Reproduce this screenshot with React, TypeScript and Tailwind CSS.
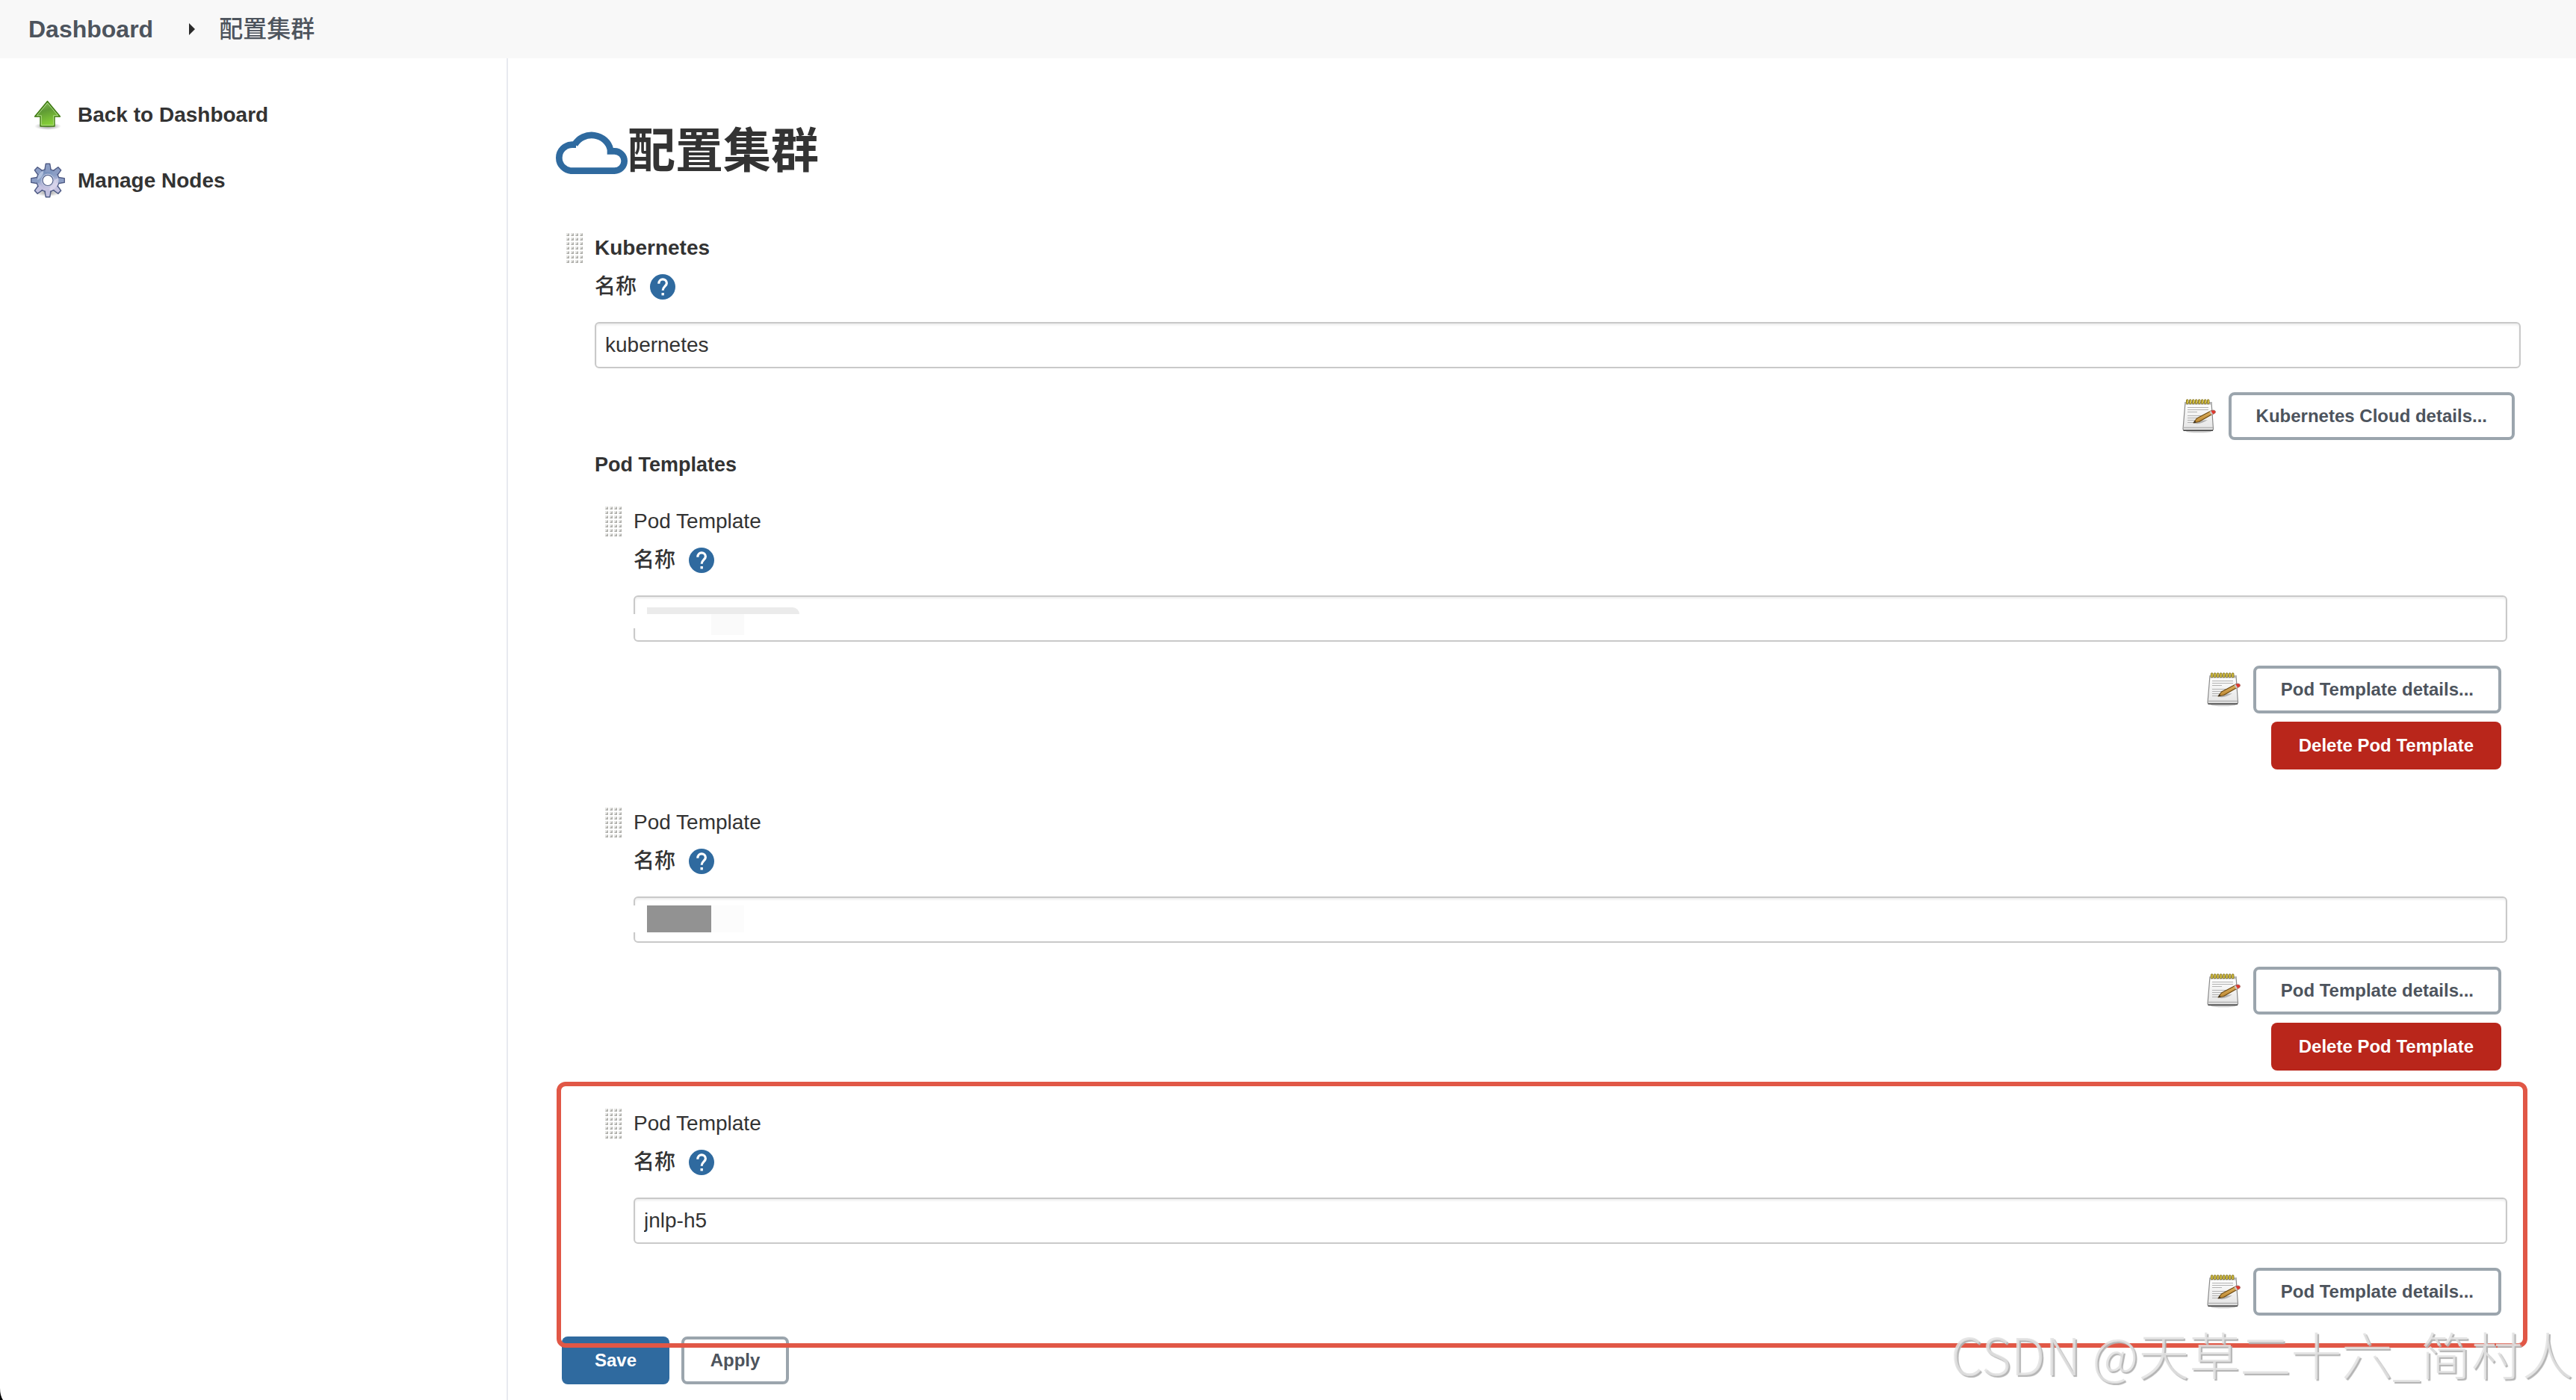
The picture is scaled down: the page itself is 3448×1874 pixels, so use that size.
import React from "react";

const FONT = "font-['Liberation_Sans','Noto_Sans_CJK_SC',sans-serif]";

function UpArrowIcon() {
  return (
    <svg className="h-12 w-12 shrink-0" viewBox="0 0 48 48" aria-hidden="true">
      <defs>
        <linearGradient id="arrowFill" x1="0" y1="0" x2="0.3" y2="1">
          <stop offset="0" stopColor="#8fc463" />
          <stop offset="0.45" stopColor="#5f9a34" />
          <stop offset="1" stopColor="#86cf38" />
        </linearGradient>
        <radialGradient id="arrowShadow">
          <stop offset="0" stopColor="#000" stopOpacity="0.45" />
          <stop offset="1" stopColor="#000" stopOpacity="0" />
        </radialGradient>
      </defs>
      <ellipse cx="24" cy="39" rx="18" ry="5" fill="url(#arrowShadow)" />
      <path d="M23.500 5.500 L40.500 26 H33 V39 H14 V26 H6.500 Z" fill="url(#arrowFill)" stroke="#3f7a12" strokeWidth="1.400" strokeLinejoin="round" />
      <path d="M23.500 8 L37.600 24.700 H31.700 V37.700 H15.300 V24.700 H9.400 Z" fill="none" stroke="#c5e8a4" strokeOpacity="0.75" strokeWidth="1" />
    </svg>
  );
}

function GearIcon() {
  const teeth = [0, 45, 90, 135, 180, 225, 270, 315];
  return (
    <svg className="h-12 w-12 shrink-0" viewBox="0 0 48 48" aria-hidden="true">
      <defs>
        <linearGradient id="gearFill" x1="0.3" y1="0" x2="0.6" y2="1">
          <stop offset="0" stopColor="#6f88b4" />
          <stop offset="0.4" stopColor="#8ea3c9" />
          <stop offset="0.6" stopColor="#b3b6d8" />
          <stop offset="1" stopColor="#d3cbe6" />
        </linearGradient>
        <radialGradient id="gearShadow">
          <stop offset="0" stopColor="#000" stopOpacity="0.4" />
          <stop offset="1" stopColor="#000" stopOpacity="0" />
        </radialGradient>
      </defs>
      <ellipse cx="24" cy="40" rx="17" ry="5" fill="url(#gearShadow)" />
      <g fill="#9fabd0" stroke="#4f5b85" strokeWidth="1.500" strokeLinejoin="round">
        {teeth.map((a) => (
          <path key={a} d="M19.500 12 L21.300 1.300 H26.700 L28.500 12 Z" transform={`rotate(${a} 24 23.500)`} />
        ))}
        <circle cx="24" cy="23.500" r="15" />
      </g>
      <circle cx="24" cy="23.500" r="14.300" fill="url(#gearFill)" />
      <g>
        {teeth.map((a) => (
          <path key={a} d="M20.500 12 L22 2.300 H26 L27.500 12 Z" transform={`rotate(${a} 24 23.500)`} fill={a > 90 && a < 270 ? "#c3c1df" : "#8b9dc4"} />
        ))}
      </g>
      <path d="M38 20 A14.300 14.300 0 0 1 26 37.600 C27 30 31 23 38 20Z" fill="#dfdcf0" opacity="0.7" />
      <path d="M10 23 A14.300 14.300 0 0 1 18 10.500 C19 15 15 21 10 23Z" fill="#c3d0e8" opacity="0.7" />
      <circle cx="24" cy="23.500" r="7" fill="#fff" stroke="#4f5b85" strokeWidth="1.200" />
      <circle cx="24" cy="23.500" r="8.300" fill="none" stroke="#c9d0e6" strokeWidth="1" />
    </svg>
  );
}

function CloudIcon() {
  return (
    <svg className="h-[61px] w-24 shrink-0" viewBox="72 102 288 183" aria-hidden="true">
      <path
        d="M153 167 H137.500 A52.500 52.500 0 0 0 137.500 272 H307.500 A39.500 39.500 0 0 0 307.500 193 H291 V187 A77 73 0 0 0 148 167"
        fill="none"
        stroke="#2f6a9f"
        strokeWidth="26"
      />
    </svg>
  );
}

function NotepadIcon() {
  return (
    <svg className="h-12 w-12 shrink-0" viewBox="0 0 48 48" aria-hidden="true">
      <defs>
        <linearGradient id="paper" x1="0" y1="0" x2="0" y2="1">
          <stop offset="0" stopColor="#ffffff" />
          <stop offset="1" stopColor="#e4e4e4" />
        </linearGradient>
        <linearGradient id="pencil" x1="0" y1="0" x2="0.4" y2="1">
          <stop offset="0" stopColor="#f2cf82" />
          <stop offset="1" stopColor="#b67d25" />
        </linearGradient>
      </defs>
      <ellipse cx="24" cy="44.500" rx="17" ry="1.800" fill="#000" opacity="0.2" />
      <path d="M6 5.500 H41 L43.500 41 Q43.500 43 41.500 43 H4.500 Q3 43 3 41 Z" fill="url(#paper)" stroke="#8a8a8a" strokeWidth="1.200" />
      <path d="M6 5 H41 L41.500 8.500 H5.700 Z" fill="#b5b5b5" />
      <path d="M3.500 39.500 H43" stroke="#b4b4b4" strokeWidth="1.600" />
      <path d="M3.500 43.200 H43" stroke="#444" strokeWidth="1.400" />
      {[0, 1, 2, 3, 4, 5, 6, 7].map((i) => (
        <rect key={i} x={7.5 + i * 4} y="1.800" width="2.400" height="6" rx="1.200" fill="#f5de4e" stroke="#75640f" strokeWidth="1" />
      ))}
      <g stroke="#b2b2b2" strokeWidth="1.200">
        <path d="M9 12.500 H37 M9 15.500 H37 M9 18.500 H22 M9 23.500 H33 M9 26.500 H28 M9 29.500 H20 M9 32.500 H18" />
      </g>
      <path d="M17 33.500 Q26 36 36 29 L28 30 Z" fill="#000" opacity="0.25" />
      <path d="M17 33 L21.500 27 L40.500 17 L42.800 21 L24.500 31.500 Z" fill="url(#pencil)" stroke="#6d4a12" strokeWidth="1.200" strokeLinejoin="round" />
      <path d="M17 33 L18.800 30.300 L20.500 32.200 Z" fill="#2a2a2a" />
      <path d="M39.500 17.500 L43 16 Q46 16 46.500 18 Q46.500 20 45 20.500 L42 22 Z" fill="#e2362d" stroke="#99635c" strokeWidth="0.800" />
      <path d="M38.500 18 L40.500 17 L43 21.300 L41 22.400 Z" fill="#c9c9c9" />
    </svg>
  );
}

function DragHandle({ id }: { id: string }) {
  return (
    <svg className="h-[42px] w-[23px] shrink-0" viewBox="0 0 23 42" aria-hidden="true">
      <defs>
        <pattern id={id} width="6" height="6" patternUnits="userSpaceOnUse">
          <rect x="1" y="1" width="4" height="4" fill="#e6e6e4" />
          <path d="M5 1 V5 H1 Z" fill="#b0b0ac" />
        </pattern>
      </defs>
      <rect width="23" height="42" fill={`url(#${id})`} />
    </svg>
  );
}

function HelpButton() {
  return (
    <button type="button" aria-label="Help" className="h-[34px] w-[34px] shrink-0 rounded-full">
      <svg viewBox="0 0 34 34" className="h-full w-full" aria-hidden="true">
        <circle cx="17" cy="17" r="17" fill="#2f6a9f" />
        <path d="M11.800 12.800 C11.800 4.800 22.400 5.200 22.400 12 C22.400 16 17.200 16.600 17.200 21.800" fill="none" stroke="#fff" strokeWidth="3.200" />
        <rect x="15.500" y="25" width="3.400" height="3.400" fill="#fff" />
      </svg>
    </button>
  );
}

function NameField({ id, value, children }: { id: string; value: string; children?: React.ReactNode }) {
  return (
    <>
      <div className="flex h-14 items-center gap-[18px]">
        <label htmlFor={id} className="text-[28px] font-medium leading-8">名称</label>
        <HelpButton />
      </div>
      <div className="relative mt-[19px]">
        <input
          id={id}
          type="text"
          defaultValue={value}
          className="block h-[62px] w-full rounded-md border-2 border-[#c9c9c9] bg-white px-3 text-[28px] shadow-[inset_0_2px_3px_rgba(0,0,0,0.08)]"
        />
        {children}
      </div>
    </>
  );
}

const OUTLINE =
  "h-16 rounded-lg border-4 border-[#9ba5ad] bg-white text-[24px] font-bold text-[#4d545d]";

function DetailsRow({ label }: { label: string }) {
  return (
    <div className="mt-8 flex items-center justify-end gap-4 pr-2">
      <NotepadIcon />
      <button type="button" className={`${OUTLINE} px-[33px]`}>{label}</button>
    </div>
  );
}

type PodProps = {
  id: string;
  value: string;
  mask?: React.ReactNode;
  deletable?: boolean;
  highlighted?: boolean;
};

function PodTemplate({ id, value, mask, deletable, highlighted }: PodProps) {
  return (
    <section className="relative flex gap-4 pl-[13px]">
      <div className="flex h-12 items-center">
        <DragHandle id={`grip-${id}`} />
      </div>
      <div className="min-w-0 flex-1">
        <h3 className="flex h-12 items-center text-[28px]">Pod Template</h3>
        <NameField id={id} value={value}>{mask}</NameField>
        <DetailsRow label="Pod Template details..." />
        {deletable && (
          <div className="mt-[11px] flex justify-end pr-2">
            <button type="button" className="h-16 rounded-lg bg-[#b9261b] px-[37px] text-[24px] font-bold text-white">
              Delete Pod Template
            </button>
          </div>
        )}
      </div>
      {highlighted && (
        <div className="pointer-events-none absolute -top-8 -right-[27px] -bottom-[43px] -left-[51px] z-10 rounded-xl border-[6px] border-[#e15746]" />
      )}
    </section>
  );
}

function FirstMask() {
  return (
    <div className="pointer-events-none absolute top-4 left-0">
      <div className="ml-[18px] h-[9px] w-[204px] rounded-tr-[16px] bg-[#ebebeb]" />
      <div className="flex h-[19px] w-[104px] bg-white" />
      <div className="absolute top-[9px] left-[104px] h-7 w-11 bg-[#fafafa]" />
    </div>
  );
}

function SecondMask() {
  return (
    <div className="pointer-events-none absolute top-3 left-0 flex h-9">
      <div className="w-[18px] bg-white" />
      <div className="w-[86px] bg-[#929292]" />
      <div className="w-11 bg-[#fcfcfc]" />
    </div>
  );
}

export default function App() {
  return (
    <div className={`${FONT} relative flex min-h-screen flex-col overflow-hidden bg-white text-[#333333]`}>
      <nav className="flex h-[78px] items-center bg-[#f8f8f8] px-[38px] text-[32px] font-bold text-[#4d545d]">
        <a href="#dashboard">Dashboard</a>
        <svg className="mr-8 ml-12 h-4 w-2" viewBox="0 0 8 16" aria-hidden="true">
          <path d="M0 0 L8 8 L0 16 Z" fill="#2b2b2b" />
        </svg>
        <a href="#clouds" className="font-medium">配置集群</a>
      </nav>

      <div className="flex flex-1">
        <aside className="w-[680px] shrink-0 border-r-2 border-[#e8eaf0] pt-8 pl-10">
          <a href="#back" className="flex h-[88px] items-center gap-4 text-[28px] font-bold">
            <UpArrowIcon />
            Back to Dashboard
          </a>
          <a href="#nodes" className="flex h-[88px] items-center gap-4 text-[28px] font-bold">
            <GearIcon />
            Manage Nodes
          </a>
        </aside>

        <main className="min-w-0 flex-1 pt-[76px] pr-[74px] pl-16">
          <h1 className="flex h-24 items-center text-[64px] leading-[96px] font-bold">
            <CloudIcon />
            配置集群
          </h1>

          <form className="mt-[58px]">
            <div className="flex gap-4 pl-[13px]">
              <div className="flex h-12 items-center">
                <DragHandle id="grip-cloud" />
              </div>
              <div className="min-w-0 flex-1">
                <h2 className="flex h-12 items-center text-[28px] font-bold">Kubernetes</h2>
                <NameField id="cloud-name" value="kubernetes" />
                <DetailsRow label="Kubernetes Cloud details..." />

                <h2 className="mt-[9px] flex h-12 items-center text-[27px] font-bold">Pod Templates</h2>
                <div className="mt-7 flex flex-col gap-[47px] pr-[18px]">
                  <PodTemplate id="pod-1" value="" mask={<FirstMask />} deletable />
                  <PodTemplate id="pod-2" value="" mask={<SecondMask />} deletable />
                  <PodTemplate id="pod-3" value="jnlp-h5" highlighted />
                </div>
              </div>
            </div>

            <div className="mt-7 flex gap-4 pb-5 pl-2">
              <button type="submit" className="h-16 w-36 rounded-lg bg-[#2f6a9f] text-[24px] font-bold text-white">Save</button>
              <button type="button" className={`${OUTLINE} w-36`}>Apply</button>
            </div>
          </form>
        </main>
      </div>

      <div className="pointer-events-none absolute right-1 bottom-3 z-20 font-['Noto_Sans_CJK_SC',sans-serif] text-[68px] leading-[100px] font-light whitespace-nowrap text-[#e2e2e2]/85 [text-shadow:2px_2px_1px_#b4b4b4]">
        CSDN @天草二十六_简村人
      </div>
      <svg className="absolute bottom-0 left-0 h-4 w-1" viewBox="0 0 4 16" aria-hidden="true">
        <path d="M0 0 Q0 10 4 16 H0 Z" fill="#000" />
      </svg>
    </div>
  );
}
